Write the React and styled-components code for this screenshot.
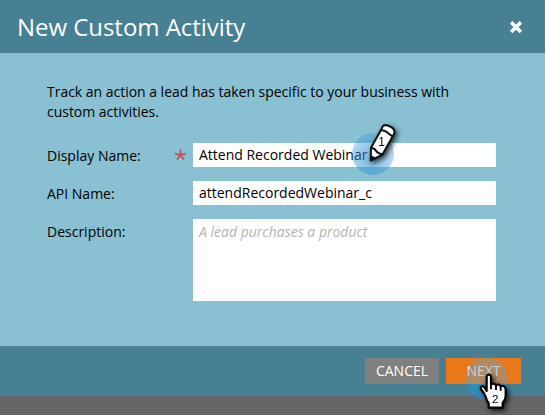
import React from "react";
import styled, { createGlobalStyle } from "styled-components";

const Global = createGlobalStyle`
  * { box-sizing: border-box; }
  body { margin: 0; overflow: hidden; font-family: "Open Sans", "Noto Sans", sans-serif; font-size: 14px; color: #000; }
`;
const Page = styled.div`
  position: relative;
  width: 545px;
  height: 415px;
  display: flex;
  flex-direction: column;
  overflow: hidden;
  background: #676467;
`;
const Header = styled.header`
  height: 53px;
  padding: 0 21px 0 17px;
  display: flex;
  align-items: center;
  justify-content: space-between;
  background: #468092;
  color: #fff;
`;
const Title = styled.h1`
  margin: 0;
  font-size: 24px;
  line-height: 34px;
  font-weight: 400;
  letter-spacing: -0.04px;
`;
const CloseButton = styled.button`
  width: 16px;
  height: 16px;
  padding: 0;
  border: 0;
  display: flex;
  background: none;
`;
const Body = styled.main`
  height: 293px;
  padding: 29px 49px 0 47px;
  background: #89c1d2;
`;
const Intro = styled.p`
  margin: 0 0 21px;
  width: 420px;
  line-height: 20px;
  letter-spacing: -0.02px;
`;
const Row = styled.div`
  display: grid;
  grid-template-columns: 127px 19px 303px;
  margin-bottom: 14px;
`;
const Label = styled.label`
  grid-column: 1;
  height: 24px;
  line-height: 25px;
`;
const Required = styled.span`
  grid-column: 2;
  display: flex;
  padding-top: 6px;
`;
const Input = styled.input`
  grid-column: 3;
  width: 303px;
  height: 24px;
  padding: 0 6px 1px;
  border: 0;
  outline: 0;
  border-radius: 0;
  background: #fff;
  color: #000;
  font: inherit;
`;
const TextArea = styled.textarea`
  grid-column: 3;
  width: 303px;
  height: 82px;
  padding: 3px 6px;
  border: 0;
  resize: none;
  display: block;
  background: #fff;
  font: inherit;
  line-height: 20px;
  &::placeholder { color: #b4b4b4; font-style: italic; opacity: 1; }
`;
const Footer = styled.footer`
  height: 50px;
  padding: 12px 24px 0 0;
  display: flex;
  justify-content: flex-end;
  gap: 7px;
  background: #468092;
`;
const Button = styled.button`
  width: ${(p) => (p.$primary ? 75 : 74)}px;
  height: 26px;
  padding: 0;
  border: 0;
  background: ${(p) => (p.$primary ? "#e8781a" : "#7f7f7f")};
  color: #fff;
  font: inherit;
  line-height: 26px;
`;
const Marker = styled.svg`
  position: absolute;
  left: ${(p) => p.$x}px;
  top: ${(p) => p.$y}px;
  pointer-events: none;
  overflow: visible;
  font-family: "Liberation Sans", Arial, sans-serif;
  filter: drop-shadow(2px 2px 2.5px rgba(0, 0, 0, 0.75));
`;
const Halo = styled.span`
  position: absolute;
  left: ${(p) => p.$x}px;
  top: ${(p) => p.$y}px;
  width: 42px;
  height: 42px;
  border-radius: 50%;
  background: ${(p) =>
    p.$warm
      ? "linear-gradient(rgba(110, 160, 190, 0.45) 60%, rgba(30, 145, 212, 0.65) 64%)"
      : "radial-gradient(circle at 45% 60%, rgba(45, 145, 212, 0.65), rgba(45, 145, 212, 0.32) 70%)"};
  pointer-events: none;
`;

function PencilMarker() {
  return (
    <Marker $x={364} $y={122} width="36" height="46" viewBox="0 0 108 138">
      <path
        d="M21 77 51 24 56 13Q61 7 72 11L84 17Q93 23 91 34L85 45 55 98 20 116Z"
        fill="#fff"
        stroke="#111"
        strokeWidth="6"
        strokeLinejoin="round"
      />
      <path d="M50 25Q61 24 69 31T86 43" fill="none" stroke="#111" strokeWidth="6" />
      <path d="M21 78Q31 78 36 86T55 97" fill="none" stroke="#111" strokeWidth="6" />
      <path d="M19 98 37 109 19 118Z" fill="#111" />
      <text x="53" y="71" textAnchor="middle" fontSize="36" fill="#000">1</text>
    </Marker>
  );
}

function HandMarker() {
  return (
    <Marker $x={474} $y={368} width="40" height="46" viewBox="0 0 120 138">
      <path
        d="M38 69V27Q38 20 44 20Q51 20 51 27V49Q60 44 66 52Q76 46 80 55Q92 51 95 63V84Q95 94 86 105V119H44V105Q38 98 35 86Q31 75 21 64Q18 55 26 54Q32 57 38 69Z"
        fill="#fff"
        stroke="#000"
        strokeWidth="6.5"
        strokeLinejoin="round"
      />
      <path d="M51 45V64M66 51V66M80 54V68" fill="none" stroke="#000" strokeWidth="5.5" />
      <text x="64" y="105" textAnchor="middle" fontSize="35" fill="#000">2</text>
    </Marker>
  );
}

export default function App() {
  return (
    <Page>
      <Global />
      <Header>
        <Title>New Custom Activity</Title>
        <CloseButton aria-label="Close">
          <svg width="16" height="16" viewBox="0 0 16 16">
            <path d="M3.7 3.7 12.3 12.3M12.3 3.7 3.7 12.3" stroke="#fff" strokeWidth="4.2" strokeLinecap="square" transform="translate(1.3 1.3) scale(.84)" />
          </svg>
        </CloseButton>
      </Header>
      <Body>
        <Intro>Track an action a lead has taken specific to your business with custom activities.</Intro>
        <Row>
          <Label htmlFor="display">Display Name:</Label>
          <Required>
            <svg width="12" height="12" viewBox="0 0 12 12">
              <path d="M6.5 6V.5M6.5 6 1 4.7M6.5 6 12 4.7M6.5 6 3 10.7M6.5 6 10 10.7" stroke="#bd5258" strokeWidth="1.8" />
            </svg>
          </Required>
          <Input id="display" defaultValue="Attend Recorded Webinar" />
        </Row>
        <Row>
          <Label htmlFor="api">API Name:</Label>
          <Input id="api" defaultValue="attendRecordedWebinar_c" />
        </Row>
        <Row>
          <Label htmlFor="description">Description:</Label>
          <TextArea id="description" placeholder="A lead purchases a product" />
        </Row>
      </Body>
      <Footer>
        <Button>CANCEL</Button>
        <Button $primary>NEXT</Button>
      </Footer>
      <Halo $x={352} $y={133} />
      <Halo $x={466} $y={358} $warm />
      <PencilMarker />
      <HandMarker />
    </Page>
  );
}
